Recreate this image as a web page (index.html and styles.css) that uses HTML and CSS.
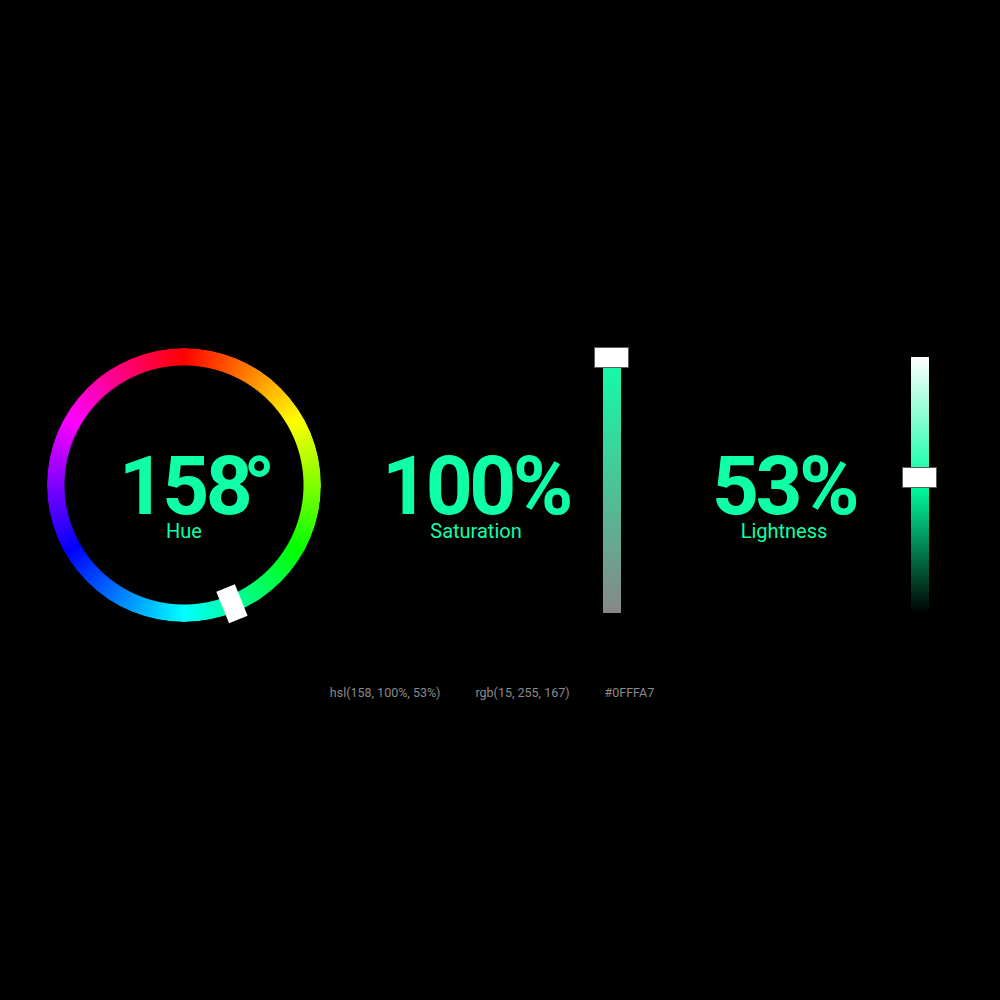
FILE: index.html
```html
<!DOCTYPE html>
<html lang="en">
<head>
<meta charset="utf-8">
<title>HSL Picker</title>
<link rel="stylesheet" href="styles.css">
</head>
<body>
<main class="picker">
  <section class="controls">
    <div class="dial">
      <div class="ring"></div>
      <div class="readout">
        <div class="value">158<span class="deg">°</span></div>
        <div class="label">Hue</div>
      </div>
      <div class="dial-handle" style="--angle: 158deg"></div>
    </div>

    <div class="group">
      <div class="readout">
        <div class="value">100%</div>
        <div class="label">Saturation</div>
      </div>
      <div class="slider">
        <div class="track track-sat"></div>
        <div class="slider-handle" style="--v: 1"></div>
      </div>
    </div>

    <div class="group">
      <div class="readout">
        <div class="value">53%</div>
        <div class="label">Lightness</div>
      </div>
      <div class="slider">
        <div class="track track-light"></div>
        <div class="slider-handle" style="--v: 0.53"></div>
      </div>
    </div>
  </section>

  <footer class="codes">
    <span>hsl(158, 100%, 53%)</span>
    <span>rgb(15, 255, 167)</span>
    <span>#0FFFA7</span>
  </footer>
</main>
</body>
</html>
```

FILE: styles.css
```css
html, body {
  margin: 0;
  padding: 0;
  background: #000;
}

body {
  width: 1000px;
  height: 1000px;
  overflow: hidden;
  font-family: Roboto, "Liberation Sans", sans-serif;
  color: #0fffa7;
}

.picker {
  display: inline-flex;
  flex-direction: column;
  align-items: center;
  padding: 348px 0 0 47px;
}

.controls {
  display: flex;
  align-items: center;
  gap: 55px;
}

.group {
  display: flex;
  align-items: center;
  gap: 18px;
}

/* Hue dial */
.dial {
  position: relative;
  width: 274px;
  height: 274px;
  display: flex;
  justify-content: center;
  align-items: center;
}

.ring {
  position: absolute;
  inset: 0;
  border-radius: 50%;
  background: conic-gradient(from 0deg, #f00, #ff0, #0f0, #0ff, #00f, #f0f, #f00);
  -webkit-mask: radial-gradient(closest-side, transparent calc(100% - 18px), #000 calc(100% - 17px));
  mask: radial-gradient(closest-side, transparent calc(100% - 18px), #000 calc(100% - 17px));
}

.dial-handle {
  position: absolute;
  left: 50%;
  top: 50%;
  width: 20px;
  height: 34px;
  background: #fff;
  transform: translate(-50%, -50%) rotate(var(--angle)) translateY(-128px);
}

/* Readouts */
.readout {
  position: relative;
  width: 200px;
  padding-top: 26px;
  display: flex;
  flex-direction: column;
  align-items: center;
}

.value {
  position: relative;
  font-size: 82px;
  font-weight: 700;
  line-height: 64px;
  letter-spacing: -3.5px;
}

.deg {
  position: absolute;
  left: 100%;
  top: 0;
  margin-left: -6px;
  letter-spacing: 0;
}

.label {
  margin-top: 1px;
  font-size: 20px;
  line-height: 24px;
  font-weight: 400;
}

/* Vertical sliders */
.slider {
  position: relative;
  width: 35px;
  height: 256px;
  display: flex;
  justify-content: center;
}

.track {
  width: 18px;
  height: 100%;
}

.track-sat {
  background: linear-gradient(to bottom, hsl(158, 100%, 53%), hsl(158, 0%, 53%));
}

.track-light {
  background: linear-gradient(to bottom, #fff, hsl(158, 100%, 50%), #000);
}

.slider-handle {
  position: absolute;
  left: 0;
  top: calc((1 - var(--v)) * 256px - 10.5px);
  box-sizing: border-box;
  width: 35px;
  height: 21px;
  background: #fff;
  border: 1px solid #5a5a5a;
}

/* Colour codes */
.codes {
  display: flex;
  gap: 35px;
  margin-top: 63px;
  font-size: 12.5px;
  line-height: 15px;
  color: #8a8a8a;
}
```
